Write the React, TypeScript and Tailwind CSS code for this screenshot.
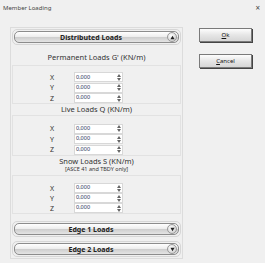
const font = "font-['Noto_Sans','DejaVu_Sans',sans-serif]";

function ArrowCircle({ up }: { up?: boolean }) {
  return (
    <div className="w-[10px] h-[10px] rounded-full border border-[#9a9a9a] bg-[radial-gradient(circle_at_40%_35%,#ffffff,#c4c4c4)] flex items-center justify-center">
      <svg width="5" height="5" viewBox="0 0 6 6">
        {up ? <path d="M3 1 L5.5 5 L0.5 5 Z" fill="#222" /> : <path d="M0.5 1 L5.5 1 L3 5 Z" fill="#222" />}
      </svg>
    </div>
  );
}

function BarButton({ label, up }: { label: string; up?: boolean }) {
  return (
    <div className="rounded-[5px] border border-[#d6d6d6] p-[1px]">
      <div className="h-[12px] rounded-[5px] border border-[#8c8c8c] bg-[linear-gradient(#ffffff,#eeeeee_45%,#cfcfcf_55%,#e4e4e4)] flex items-center pr-[1px]">
        <span className="flex-1 text-center text-[7px] font-bold text-[#222] leading-none">{label}</span>
        <ArrowCircle up={up} />
      </div>
    </div>
  );
}

function NumberRow({ axis }: { axis: string }) {
  return (
    <div className="flex items-center h-[10.5px]">
      <span className="w-[61px] text-right pr-[20px] text-[7px] text-[#333] leading-none">{axis}</span>
      <div className="w-[49px] h-[10px] bg-white border border-[#d8d8d8] flex items-center">
        <span className="flex-1 pl-[1px] text-[5.5px] text-[#1a2a50] leading-none">0,000</span>
        <div className="w-[6px] flex flex-col items-center gap-[1px]">
          <svg width="4" height="3" viewBox="0 0 4 3"><path d="M2 0 L4 3 L0 3 Z" fill="#666" /></svg>
          <svg width="4" height="3" viewBox="0 0 4 3"><path d="M0 0 L4 0 L2 3 Z" fill="#666" /></svg>
        </div>
      </div>
    </div>
  );
}

function XYZBox({ className }: { className: string }) {
  return (
    <div className={`border border-[#e2e2e2] bg-[#f0f0f0] flex flex-col ${className}`}>
      <NumberRow axis="X" />
      <NumberRow axis="Y" />
      <NumberRow axis="Z" />
    </div>
  );
}

function DialogButton({ children }: { children: React.ReactNode }) {
  return (
    <div className="w-[53px] h-[14px] border border-[#7a7a7a] bg-[linear-gradient(#fdfdfd,#e6e6e6_50%,#d6d6d6)] shadow-[1px_1px_0_#444] flex items-center justify-center text-[6px] text-[#111] leading-none">
      {children}
    </div>
  );
}

export default function App() {
  return (
    <div className={`w-[265px] h-[263px] bg-[#f0f0f0] flex flex-col ${font}`}>
      <div className="h-[14px] flex items-center justify-between px-[3px] pt-[2px]">
        <span className="text-[6px] text-[#444]">Member Loading</span>
        <span className="text-[8px] text-[#444] pr-[2px]">×</span>
      </div>
      <div className="flex pl-[10px] pt-[13px]">
        <div className="w-[173px] h-[232px] border border-[#dcdcdc] p-[1px] flex flex-col">
          <BarButton label="Distributed Loads" up />
          <div className="h-[21px] flex items-center justify-center pt-[5px] text-[7.5px] text-[#333]">Permanent Loads G&apos; (KN/m)</div>
          <XYZBox className="h-[39px] pt-[6px]" />
          <div className="h-[11px] flex items-center justify-center text-[7.5px] text-[#333]">Live Loads Q (KN/m)</div>
          <XYZBox className="h-[41px] pt-[7px]" />
          <div className="h-[20px] flex flex-col items-center justify-center text-[#333] leading-none">
            <span className="text-[7.5px]">Snow Loads S (KN/m)</span>
            <span className="text-[5.5px] mt-[2px]">[ASCE 41 and TBDY only]</span>
          </div>
          <XYZBox className="h-[39px] pt-[7px]" />
          <div className="mt-[7px] flex flex-col gap-[4px]">
            <BarButton label="Edge 1 Loads" />
            <BarButton label="Edge 2 Loads" />
          </div>
        </div>
        <div className="ml-[16px] flex flex-col gap-[12px] pt-[1px]">
          <DialogButton><span><u>O</u>k</span></DialogButton>
          <DialogButton><span><u>C</u>ancel</span></DialogButton>
        </div>
      </div>
    </div>
  );
}
